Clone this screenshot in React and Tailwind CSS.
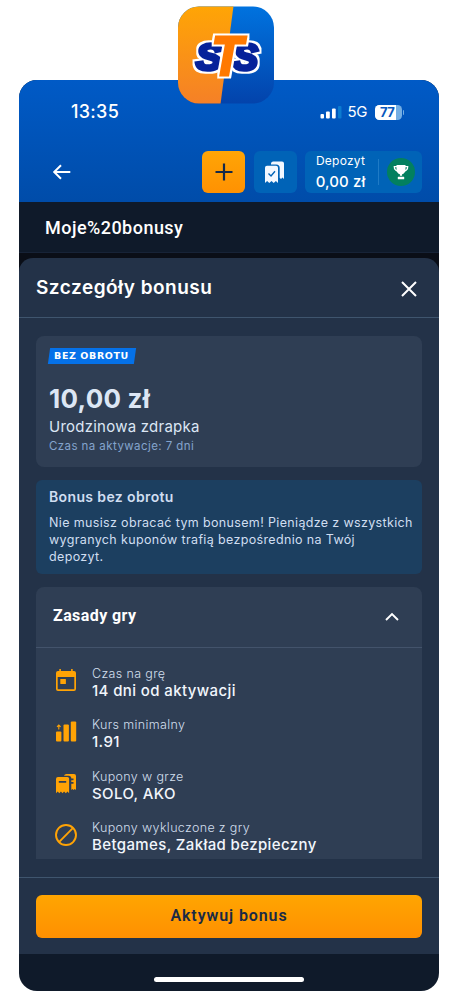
import React, { useState } from "react";

const rules = [
  { icon: "calendar", label: "Czas na grę", value: "14 dni od aktywacji" },
  { icon: "odds", label: "Kurs minimalny", value: "1.91" },
  { icon: "coupons", label: "Kupony w grze", value: "SOLO, AKO" },
  { icon: "banned", label: "Kupony wykluczone z gry", value: "Betgames, Zakład bezpieczny" },
];

const RuleIcon = ({ name }) => {
  if (name === "calendar") {
    return (
      <svg width="24" height="24" viewBox="0 0 24 24" fill="#ffa305">
        <path fillRule="evenodd" d="M5.300 0h1.600v2h10.200V0h1.600v2H20a2 2 0 0 1 2 2v16a2 2 0 0 1-2 2H4a2 2 0 0 1-2-2V4a2 2 0 0 1 2-2h1.300zM3.700 8v12.200h16.600V8z" />
        <rect x="6.300" y="10" width="5.600" height="5" rx="0.600" />
      </svg>
    );
  }
  if (name === "odds") {
    return (
      <svg width="24" height="24" viewBox="0 0 24 24" fill="#ffa305">
        <rect x="2" y="11.500" width="5.400" height="10" rx="1" />
        <rect x="9.500" y="4.500" width="5.400" height="17" rx="1" />
        <rect x="16.800" y="1.500" width="5.400" height="20" rx="1" />
        <path d="M4.800 9.500V5M3 6.800 4.800 5l1.800 1.800" fill="none" stroke="#ffa305" strokeWidth="1.100" />
      </svg>
    );
  }
  if (name === "coupons") {
    return (
      <svg width="24" height="24" viewBox="0 0 24 24" fill="#ffa305">
        <path d="M10 3.800Q10.500 2 12.500 2H20a2 2 0 0 1 2 2v14l-1.200-1-1.200 1-1.200-1-1.100 1V6.500a2.700 2.700 0 0 0-2.700-2.700z" />
        <path d="M2 7a2 2 0 0 1 2-2h9.500a1.600 1.600 0 0 1 1.600 1.600v14.600l-1.600-1.600-1.700 1.600-1.700-1.600-1.600 1.600-1.600-1.600-1.600 1.600-1.600-1.600L2 21.200z" />
        <path d="M4.800 9.800h7.400M16.300 7.300h3.200M16.300 10.800h3.200" stroke="#2f3f55" strokeWidth="1.700" />
      </svg>
    );
  }
  return (
    <svg width="24" height="24" viewBox="0 0 24 24" fill="none" stroke="#ffa305" strokeWidth="1.900">
      <circle cx="12" cy="12" r="10" />
      <path d="M5.200 18.800 18.800 5.200" />
    </svg>
  );
};

const AppLogo = () => (
  <svg width="98" height="98" viewBox="0 0 98 98">
    <defs>
      <linearGradient id="logoOrange" x1="0" y1="0" x2="0" y2="1">
        <stop offset="0" stopColor="#ffa505" />
        <stop offset="1" stopColor="#f58027" />
      </linearGradient>
      <linearGradient id="logoBlue" x1="0" y1="0" x2="0" y2="1">
        <stop offset="0" stopColor="#0073df" />
        <stop offset="1" stopColor="#0343ab" />
      </linearGradient>
      <clipPath id="logoClip">
        <rect x="1" y="0.500" width="96" height="97" rx="21" />
      </clipPath>
      {/* White outline round each letter */}
      <filter id="outline" x="-30%" y="-30%" width="160%" height="160%" colorInterpolationFilters="sRGB">
        <feMorphology in="SourceAlpha" operator="dilate" radius="1.600" result="grown" />
        <feFlood floodColor="#fff" />
        <feComposite in2="grown" operator="in" result="edge" />
        <feMerge>
          <feMergeNode in="edge" />
          <feMergeNode in="SourceGraphic" />
        </feMerge>
      </filter>
    </defs>
    <g clipPath="url(#logoClip)">
      <rect width="98" height="98" fill="url(#logoBlue)" />
      <path d="M0 0h56.500L43.500 98H0z" fill="url(#logoOrange)" />
    </g>
    <g fontFamily="'Liberation Sans', Arial, sans-serif" fontWeight="700" fontStyle="italic">
      <g fill="#06229a" stroke="#06229a" strokeWidth="3.500">
        <text x="19" y="64" fontSize="37" textLength="26" lengthAdjust="spacingAndGlyphs" filter="url(#outline)">S</text>
        <text x="56" y="64" fontSize="37" textLength="25" lengthAdjust="spacingAndGlyphs" filter="url(#outline)">S</text>
      </g>
      <text x="34.500" y="68.500" fontSize="56" textLength="31" lengthAdjust="spacingAndGlyphs" fill="#ff7900" stroke="#ff7900" strokeWidth="2.800" filter="url(#outline)">T</text>
    </g>
  </svg>
);

const StatusIcons = () => (
  <div className="flex items-center">
    <svg width="22" height="14" viewBox="0 0 22 14" fill="#fff">
      <rect x="0.500" y="9" width="3.500" height="4.500" rx="1" />
      <rect x="6" y="6.500" width="3.800" height="7" rx="1" />
      <rect x="12" y="3.500" width="3.700" height="10" rx="1" />
      <rect x="18" y="1" width="3.500" height="12.500" rx="1" fill="#0b7bd0" />
    </svg>
    <span className="ml-[6px] w-[20px] text-[15px] leading-[18px] tracking-[-0.3px]">5G</span>
    <div className="relative ml-[7px] flex h-[15px] w-[27px] items-center overflow-hidden rounded-[4.500px] bg-[#74aee3]">
      <div className="h-full w-[21px] bg-white" />
      <span className="absolute left-[5.500px] text-[13px] font-bold leading-[15px] tracking-[-0.5px] text-[#0858bd]">77</span>
    </div>
    <div className="ml-px h-[5px] w-[1.500px] rounded-r bg-[#74aee3]" />
  </div>
);

const App = () => {
  const [open, setOpen] = useState(true);

  return (
    <div className="relative flex h-[1000px] w-[451px] flex-col bg-white pl-[19px] pr-[12px] pt-[80px] font-['Inter',sans-serif] text-white">
      <div className="absolute left-[177px] top-[6px]">
        <AppLogo />
      </div>

      <div className="flex h-[911px] flex-col overflow-hidden rounded-[18px] bg-[#0f1a2a]">
        {/* Header */}
        <header className="h-[122px] shrink-0 bg-linear-to-b from-[#005ac6] to-[#004ca9]">
          <div className="flex h-[64px] items-center justify-between pl-[52px] pr-[35px]">
            <span className="text-[18px] font-medium leading-[22px] tracking-[0.3px]">13:35</span>
            <StatusIcons />
          </div>
          <div className="flex items-center pl-[33px] pr-[17px] pt-[7px]">
            <button type="button" className="cursor-pointer">
              <svg width="20" height="20" viewBox="0 0 20 20" fill="none" stroke="#fff" strokeWidth="2">
                <path d="M18.300 10H2.200M9 3.200 2.200 10 9 16.800" />
              </svg>
            </button>
            <div className="ml-auto flex gap-[8.500px]">
              <button type="button" className="flex h-[42px] w-[43px] cursor-pointer items-center justify-center rounded-md bg-linear-to-b from-[#ffa506] to-[#ff9102]">
                <svg width="18" height="18" viewBox="0 0 18 18" stroke="#15294a" strokeWidth="2.200">
                  <path d="M9 0.500v17M0.500 9h17" />
                </svg>
              </button>
              <button type="button" className="flex h-[42px] w-[43px] cursor-pointer items-center justify-center rounded-md bg-[#0063b7]">
                <svg width="22" height="24" viewBox="0 0 22 24" fill="#f3f8ff">
                  <path d="M7 3.500Q7.200 1.500 9.200 1.500H18a2 2 0 0 1 2 2V19l-1.500-1.500L17 19l-1.300-1.300V8a3.500 3.500 0 0 0-3.500-3.500H7z" />
                  <path d="M1 7.700a2 2 0 0 1 2-2h9a2 2 0 0 1 2 2V23l-2.100-1.900L9.700 23l-2.200-1.900L5.300 23l-2.200-1.900L1 23z" />
                  <path d="m4.500 13.500 2.500 2.400 4-4.600" fill="none" stroke="#0063b7" strokeWidth="1.400" />
                </svg>
              </button>
              <div className="flex h-[42px] w-[117px] items-center rounded-md bg-[#0063b7]">
                <div className="w-[71px] text-center">
                  <p className="text-[12px] leading-[18px] tracking-[0.25px]">Depozyt</p>
                  <p className="pt-[2px] text-[15px] font-medium leading-[20px] tracking-[0.1px]">0,00 zł</p>
                </div>
                <div className="ml-[2px] h-[26px] w-px bg-[#1f7bc6]" />
                <div className="ml-[8px] flex size-[28px] items-center justify-center rounded-full bg-[#02805f]">
                  <svg width="16" height="16" viewBox="0 0 16 16" fill="#fff">
                    <path d="M3.500 1h9v5q-.4 3.400-3.400 4.200v1.500H6.900v-1.500Q3.900 9.400 3.500 6z" />
                    <path d="M4 2.600H1.300q0 4 3.800 4.600M12 2.600h2.700q0 4-3.800 4.600" fill="none" stroke="#fff" strokeWidth="1.300" />
                    <rect x="4.800" y="12.700" width="6.400" height="2.600" rx="0.400" />
                  </svg>
                </div>
              </div>
            </div>
          </div>
        </header>

        <div className="h-[51px] shrink-0 border-b border-[#172337] bg-[#0f1a2a] pl-[26px] pt-[14px]">
          <h1 className="font-['Roboto',sans-serif] text-[18px] font-medium leading-[23px] tracking-[0.47px]">Moje%20bonusy</h1>
        </div>

        {/* Bonus details sheet */}
        <div className="h-[701px] shrink-0 bg-[#0a0e17] pt-[5px]">
          <section className="flex h-[696px] flex-col rounded-t-[14px] bg-[#233248]">
            <div className="flex h-[60px] items-center justify-between border-b border-[#3f556e] pl-[17px] pr-[21px]">
              <h2 className="text-[19px] font-semibold leading-[22px] tracking-[0.5px]">Szczegóły bonusu</h2>
              <button type="button" className="mt-[2px] cursor-pointer">
                <svg width="18" height="18" viewBox="0 0 18 18" stroke="#fff" strokeWidth="2">
                  <path d="m2 2 14 14M16 2 2 16" />
                </svg>
              </button>
            </div>

            <div className="flex h-[541px] flex-col gap-[13px] px-[17px] pt-[18px]">
              <div className="h-[131px] rounded-lg bg-[#2f3e54] pl-[13px] pt-[12px]">
                <div className="-ml-[0.500px] flex h-[16px] w-[86px] -skew-x-8 items-center bg-[#0571e8] pl-[5px]">
                  <span className="skew-x-8 whitespace-nowrap font-['DejaVu_Sans',sans-serif] text-[9.500px] font-bold leading-none tracking-[0.6px]">BEZ OBROTU</span>
                </div>
                <p className="mt-[19px] text-[26px] font-bold leading-[32px] tracking-[0.25px] text-[#dce6f4]">10,00 zł</p>
                <p className="mt-[2px] text-[15px] leading-[20px] tracking-[0.24px] text-[#dce6f4]">Urodzinowa zdrapka</p>
                <p className="text-[11.500px] leading-[18px] tracking-[0.42px] text-[#84a4cd]">Czas na aktywacje: 7 dni</p>
              </div>

              <div className="h-[94px] rounded-md bg-[#1c3f60] pl-[13px] pt-[8px] text-[#d0def1]">
                <h3 className="text-[14px] font-semibold leading-[18px] tracking-[0.37px]">Bonus bez obrotu</h3>
                <p className="mt-[8px] whitespace-nowrap text-[12.500px] leading-[17px] tracking-[0.35px]">
                  Nie musisz obracać tym bonusem! Pieniądze z wszystkich
                  <br />
                  wygranych kuponów trafią bezpośrednio na Twój
                  <br />
                  depozyt.
                </p>
              </div>

              <div className="h-[272px] overflow-hidden rounded-t-lg bg-[#2f3e54]">
                <button
                  type="button"
                  onClick={() => setOpen(!open)}
                  className="flex h-[61px] w-full cursor-pointer items-center justify-between border-b border-[#43536b] pl-[17px] pr-[23px]"
                >
                  <span className="-mt-[3px] font-['Roboto',sans-serif] text-[16px] font-bold tracking-[0.42px]">Zasady gry</span>
                  <svg width="14" height="10" viewBox="0 0 14 10" fill="none" stroke="#fff" strokeWidth="1.900">
                    <path d="M1 8l6-6 6 6" />
                  </svg>
                </button>
                {open && (
                  <ul className="flex flex-col gap-[15.300px] pl-[18px] pt-[16px]">
                    {rules.map((rule) => (
                      <li key={rule.icon} className="flex h-[36px] gap-[14px]">
                        <div className="pt-[5px]">
                          <RuleIcon name={rule.icon} />
                        </div>
                        <div className="pt-px">
                          <p className="text-[12.500px] font-light leading-[18px] tracking-[0.35px] text-[#d2deed]">{rule.label}</p>
                          <p className="text-[15px] font-medium leading-[16px] tracking-[0.38px] text-[#f2f6fc]">{rule.value}</p>
                        </div>
                      </li>
                    ))}
                  </ul>
                )}
              </div>
            </div>

            <div className="mt-[18px] border-t border-[#3f556e] px-[17px] pt-[17px]">
              <button
                type="button"
                className="flex h-[43px] w-full cursor-pointer items-center justify-center rounded-md bg-linear-to-b from-[#ffa501] to-[#ff9001] pb-[2px] font-['Roboto',sans-serif] text-[16px] font-semibold tracking-[0.9px] text-[#1a2a45]"
              >
                Aktywuj bonus
              </button>
            </div>
          </section>
        </div>

        {/* Home indicator */}
        <div className="flex flex-1 justify-center pt-[23px]">
          <div className="h-[5px] w-[150px] rounded-full bg-white" />
        </div>
      </div>
    </div>
  );
};

export default App;
